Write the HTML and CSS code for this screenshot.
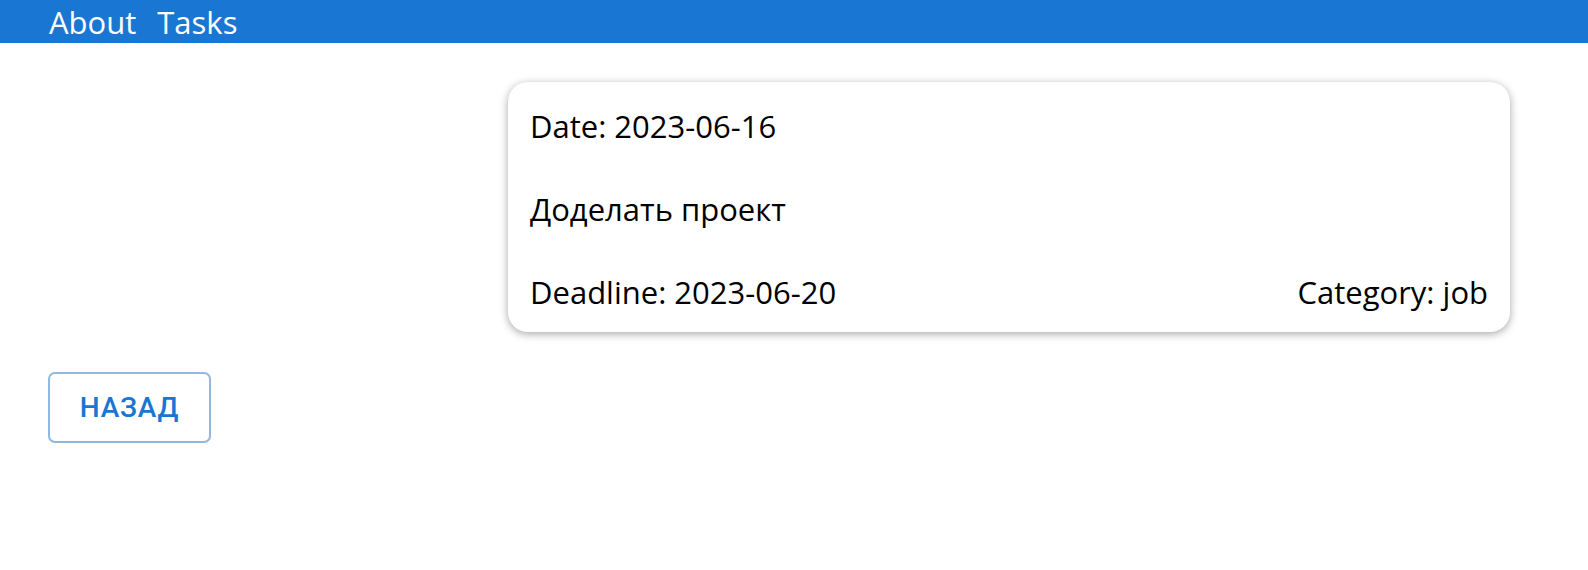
FILE: index.html
```html
<!DOCTYPE html>
<html lang="ru">
<head>
<meta charset="utf-8">
<title>Task</title>
<link rel="stylesheet" href="styles.css">
</head>
<body>
<header class="navbar">
  <nav class="nav-links">
    <a class="nav-link" href="#">About</a>
    <a class="nav-link" href="#">Tasks</a>
  </nav>
</header>
<main class="page">
  <section class="task-card">
    <p class="task-line">Date: 2023-06-16</p>
    <p class="task-line">Доделать проект</p>
    <div class="task-line task-footer">
      <span>Deadline: 2023-06-20</span>
      <span>Category: job</span>
    </div>
  </section>
  <div class="actions">
    <button class="back-btn" type="button">Назад</button>
  </div>
</main>
</body>
</html>
```

FILE: styles.css
```css
* { box-sizing: border-box; }

html, body {
  margin: 0;
  padding: 0;
  background: #ffffff;
  font-family: "Open Sans", "Noto Sans", sans-serif;
  color: #000000;
}

.navbar {
  height: 43px;
  background: #1976d2;
  padding: 0 49px;
  overflow: hidden;
}

.nav-links {
  display: flex;
  gap: 21px;
  height: 100%;
  align-items: flex-start;
}

.nav-link {
  color: #ffffff;
  text-decoration: none;
  font-size: 31px;
  line-height: 42px;
  padding-top: 1px;
}

.page {
  padding: 39px 48px 40px;
}

.task-card {
  margin-left: 460px;
  width: 1002px;
  border-radius: 20px;
  background: #ffffff;
  box-shadow: 0 2px 8px rgba(0, 0, 0, 0.35);
  padding: 23px 22px 19px;
  display: flex;
  flex-direction: column;
  gap: 41px;
}

.task-line {
  margin: 0;
  font-size: 31px;
  line-height: 42px;
}

.task-footer {
  display: flex;
  justify-content: space-between;
}

.actions {
  margin-top: 40px;
  display: flex;
}

.back-btn {
  width: 163px;
  height: 71px;
  border: 2px solid #8fb8e4;
  border-radius: 7px;
  background: #ffffff;
  color: #1976d2;
  font-family: Roboto, "Liberation Sans", sans-serif;
  font-weight: 500;
  font-size: 28px;
  letter-spacing: 0.8px;
  text-transform: uppercase;
  padding: 0;
  cursor: pointer;
}
```
